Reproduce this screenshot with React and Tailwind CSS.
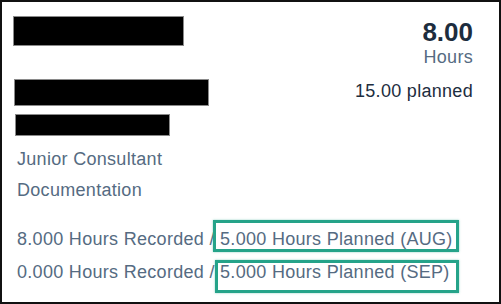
const Redacted = ({ className }) => (
  <div className={`bg-black border border-[#8a8a8a] ${className}`} />
);

const Highlight = ({ children, box }) => (
  <span className="relative inline-block leading-[22px]">
    {children}
    <span className={`absolute border-[3px] border-[#25a389] shadow-[0_0_2px_rgba(37,163,137,0.5)] ${box}`} />
  </span>
);

export default function App() {
  return (
    <div
      className="w-[501px] h-[304px] border-2 border-[#111] bg-white flex flex-col overflow-hidden"
      style={{ fontFamily: '"Liberation Sans", Arial, sans-serif' }}
    >
      {/* top: redacted names + totals */}
      <div className="flex justify-between">
        <div className="flex flex-col pl-[11px] pt-[14px]">
          <Redacted className="w-[171px] h-[30px]" />
          <Redacted className="w-[195px] h-[27px] mt-[33px] ml-px" />
          <Redacted className="w-[155px] h-[22px] mt-[8px] ml-[2px]" />
        </div>

        <div className="flex flex-col items-end pr-[26px] pt-[15px] whitespace-nowrap tracking-[0.3px]">
          <p className="text-[26px] leading-[30px] font-bold tracking-normal text-[#1d2d3e]">8.00</p>
          <p className="text-[18px] leading-[20px] text-[#556b82]">Hours</p>
          <p className="mt-[13px] text-[18px] leading-[22px] text-[#1d2d3e]">15.00 planned</p>
        </div>
      </div>

      {/* details */}
      <div className="pl-[15px] text-[18px] leading-[22px] tracking-[0.3px] text-[#556b82] whitespace-nowrap">
        <p className="mt-[12px]">Junior Consultant</p>
        <p className="mt-[9px]">Documentation</p>
        <p className="mt-[27px]">
          8.000 Hours Recorded /{" "}
          <Highlight box="-top-[8px] -bottom-[2px] -left-[7px] -right-[6px]">
            5.000 Hours Planned (AUG)
          </Highlight>
        </p>
        <p className="mt-[11px]">
          0.000 Hours Recorded /{" "}
          <Highlight box="-top-[1px] -bottom-[10px] -left-[5px] -right-[9px]">
            5.000 Hours Planned (SEP)
          </Highlight>
        </p>
      </div>
    </div>
  );
}
